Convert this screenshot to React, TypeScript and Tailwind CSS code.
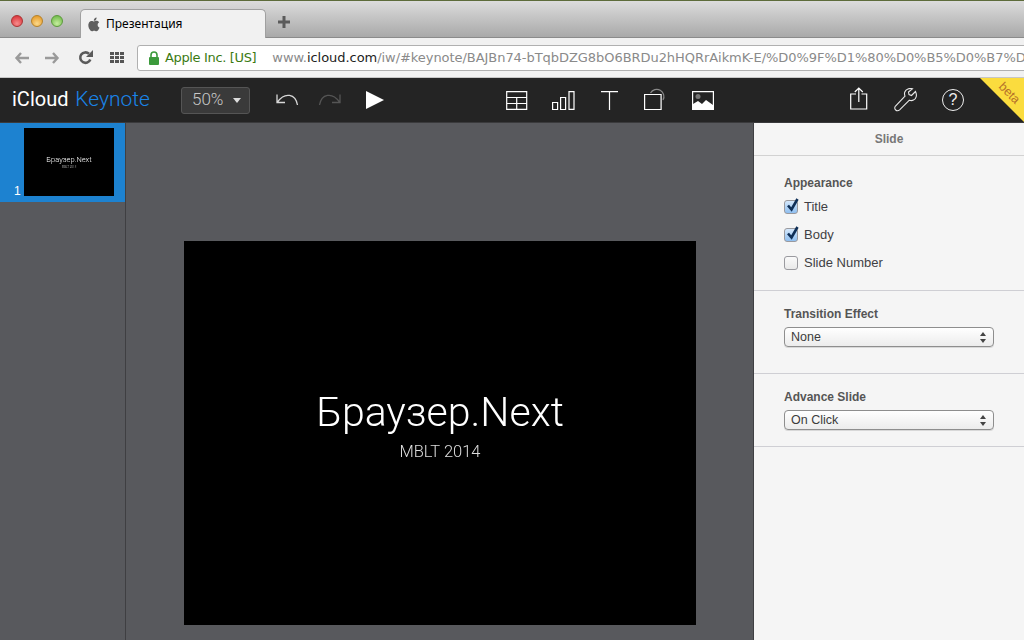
import React from "react";

const sans = "font-['Liberation_Sans',Arial,sans-serif]";

function Apple() {
  return (
    <svg width="13" height="15" viewBox="0 0 24 28" className="shrink-0">
      <path fill="#5f5f5f" d="M19.7 14.8c0-3.3 2.7-4.9 2.8-5-1.5-2.2-3.900-2.500-4.700-2.600-2-.2-3.900 1.200-4.900 1.200s-2.600-1.200-4.200-1.100c-2.200 0-4.200 1.200-5.300 3.200-2.300 3.900-.6 9.800 1.600 13 1.100 1.600 2.400 3.300 4.100 3.300 1.600-.1 2.300-1.100 4.200-1.100s2.500 1.100 4.200 1c1.700 0 2.800-1.600 3.900-3.200 1.200-1.800 1.700-3.600 1.800-3.700-.1 0-3.500-1.300-3.500-5zM16.500 5.100c.9-1.100 1.500-2.600 1.300-4.100-1.300.1-2.900.9-3.800 2-.8 1-1.600 2.500-1.400 4 1.500.1 3-.8 3.900-1.900z" />
    </svg>
  );
}

function Arrow({ flip }: { flip?: boolean }) {
  return (
    <svg width="15" height="14" viewBox="0 0 15 14" className={flip ? "-scale-x-100" : ""}>
      <path d="M7 2 2.500 7 7 12M3 7h12" fill="none" stroke="#9a9a9a" strokeWidth="2.400" />
    </svg>
  );
}

function Check({ on }: { on?: boolean }) {
  return (
    <div className={`relative w-[14px] h-[14px] rounded-[3px] border border-[#9a9a9f] ${on ? "bg-gradient-to-b from-[#d5e8fb] to-[#8fbff0]" : "bg-gradient-to-b from-[#fafafa] to-[#e9e9e9]"}`}>
      {on && (
        <svg width="16" height="16" viewBox="0 0 16 16" className="absolute left-0 -top-[4px]">
          <path d="M3 8.500 6.500 12.500 12.500 2" fill="none" stroke="#0f2f57" strokeWidth="2.600" />
        </svg>
      )}
    </div>
  );
}

function CheckRow({ label, on }: { label: string; on?: boolean }) {
  return (
    <div className="flex items-center h-[28px] gap-[6px]">
      <Check on={on} />
      <span className="text-[13px] text-[#3f3f44]">{label}</span>
    </div>
  );
}

function Select({ value }: { value: string }) {
  return (
    <div className="mt-[6px] w-[210px] h-[20px] rounded-[4px] border border-[#8e8e8e] bg-gradient-to-b from-[#ffffff] to-[#ececec] flex items-center justify-between pl-[6px] pr-[7px] shadow-[0_1px_0_#d8d8d8]">
      <span className="text-[12.5px] text-[#3c3c3c]">{value}</span>
      <svg width="6" height="11" viewBox="0 0 6 11">
        <path d="M3 0 6 4H0zM3 11 0 7h6z" fill="#444" />
      </svg>
    </div>
  );
}

export default function App() {
  return (
    <div className={`w-[1024px] h-[640px] overflow-hidden flex flex-col bg-[#58595d] ${sans}`}>
      <div className="h-[1px] bg-[#5d6b3a]" />
      {/* tab strip */}
      <div className="h-[37px] flex items-end bg-gradient-to-b from-[#dcdcdc] to-[#a9a9a9] border-b border-[#8b8b8b]">
        <div className="w-[80px] h-full flex items-start gap-[8px] pl-[11px] pt-[14px]">
          <div className="w-[12px] h-[12px] rounded-full border border-[#a33] bg-[radial-gradient(circle_at_50%_75%,#f78c8c,#d5262d)]" />
          <div className="w-[12px] h-[12px] rounded-full border border-[#b5822a] bg-[radial-gradient(circle_at_50%_75%,#fbd98a,#e28f16)]" />
          <div className="w-[12px] h-[12px] rounded-full border border-[#5c9a3c] bg-[radial-gradient(circle_at_50%_75%,#c6ee9e,#62b23c)]" />
        </div>
        <div className="w-[186px] h-[29px] -mb-px rounded-t-[5px] border border-b-0 border-[#a0a0a0] bg-[#f1f1f1] flex items-center pl-[6px] gap-[6px]">
          <Apple />
          <span className="text-[12px] text-black font-['Noto_Sans',sans-serif]">Презентация</span>
        </div>
        <svg width="12" height="12" viewBox="0 0 12 12" className="ml-[12px] mb-[9px]">
          <path d="M6 0v12M0 6h12" stroke="#5b5b5b" strokeWidth="3" />
        </svg>
      </div>
      {/* address bar */}
      <div className="h-[40px] bg-[#f1f1f1] flex items-center border-b border-[#c6c6c6]">
        <div className="w-[137px] flex items-center pl-[14px]">
          <Arrow />
          <div className="ml-[16px]"><Arrow flip /></div>
          <svg width="15" height="15" viewBox="0 0 15 15" className="ml-[18px]">
            <path d="M12.300 9.500A5.200 5.200 0 1 1 11 3.800" fill="none" stroke="#5b5b5b" strokeWidth="2.600" />
            <path d="M8 7h7V0z" fill="#5b5b5b" />
          </svg>
          <div className="ml-[17px] grid grid-cols-3 gap-[1px]">
            {Array.from({ length: 9 }).map((_, i) => (
              <div key={i} className="w-[4px] h-[3px] bg-[#555]" />
            ))}
          </div>
        </div>
        <div className="h-[26px] flex-1 min-w-0 -mr-[8px] rounded-l-[3px] border border-[#b0b0b0] bg-white flex items-center pl-[10px] overflow-hidden whitespace-nowrap font-['DejaVu_Sans',sans-serif] text-[13px]">
          <svg width="12" height="14" viewBox="0 0 12 14" className="shrink-0">
            <path d="M3 6V4a3 3 0 0 1 6 0v2" fill="none" stroke="#3c9a3c" strokeWidth="1.600" />
            <rect x="1" y="6" width="10" height="8" rx="1" fill="#3c9a3c" />
          </svg>
          <span className="ml-[5px] text-[#3b7a12] tracking-[-0.35px]">Apple Inc. [US]</span>
          <div className="ml-[8px] w-px h-[13px] bg-[#d5d5d5]" />
          <span className="ml-[8px] text-[#8a8a8a] tracking-[-0.05px]">
            www.<span className="text-[#222]">icloud.com</span>/iw/#keynote/BAJBn74-bTqbDZG8bO6BRDu2hHQRrAikmK-E/%D0%9F%D1%80%D0%B5%D0%B7%D0%B5%D0%BD%D1%82
          </span>
        </div>
      </div>
      {/* keynote toolbar */}
      <div className="relative h-[44px] bg-[#242424] flex items-center text-white overflow-hidden">
        <div className="w-[181px] pl-[12px] text-[20px] whitespace-nowrap font-['Roboto',sans-serif] font-light">
          <span className="text-white font-normal">iCloud</span> <span className="text-[#1a84e8] text-[21px] ml-[2px]">Keynote</span>
        </div>
        <div className="w-[69px] h-[27px] rounded-[3px] border border-[#555] bg-[#3a3a3a] flex items-center pl-[10px] gap-[10px] text-[17px] text-[#c8c8c8] font-['Roboto',sans-serif] font-light">
          50%
          <svg width="8" height="5" viewBox="0 0 8 5"><path d="M0 0h8L4 5z" fill="#ddd" /></svg>
        </div>
        <svg width="24" height="18" viewBox="0 0 24 18" className="ml-[25px]">
          <path d="M22.500 14C20.500 3 10 .5 2.500 11M2 3.500V11.500H10" fill="none" stroke="#d8d8d8" strokeWidth="1.300" />
        </svg>
        <svg width="24" height="18" viewBox="0 0 24 18" className="ml-[19px]">
          <path d="M1.500 14C3.500 3 14 .5 21.500 11M22 3.500V11.500H14" fill="none" stroke="#555" strokeWidth="1.300" />
        </svg>
        <svg width="18" height="18" viewBox="0 0 18 18" className="ml-[24px]"><path d="M0 0l18 9L0 18z" fill="#fff" /></svg>
        <svg width="22" height="19" viewBox="0 0 22 19" className="ml-[122px]">
          <path d="M.7.700h20v17.600H.7zM.7 6.500h20M.7 12.500h20M10.700 6.500v11.800" fill="none" stroke="#fff" strokeWidth="1.200" />
        </svg>
        <svg width="23" height="19" viewBox="0 0 23 19" className="ml-[24px]">
          <path d="M.6 11.500h5v7h-5zM8.600 6.500h5v12h-5zM17 .6h5v17.800h-5z" fill="none" stroke="#fff" strokeWidth="1.200" />
        </svg>
        <svg width="18" height="19" viewBox="0 0 18 19" className="ml-[26px]">
          <path d="M0 .7h17M8.500 .7V19" fill="none" stroke="#fff" strokeWidth="1.200" />
        </svg>
        <svg width="24" height="22" viewBox="0 0 24 22" className="ml-[25px] -mt-[3px]">
          <path d="M.6 6.500h16.500v15H.6z" fill="none" stroke="#fff" strokeWidth="1.200" />
          <path d="M6.500 5A6 6 0 1 1 19 12" fill="none" stroke="#8a8a8a" strokeWidth="1.200" />
        </svg>
        <svg width="22" height="19" viewBox="0 0 22 19" className="ml-[24px]">
          <path d="M.6.600h20.800v17.800H.6z" fill="none" stroke="#fff" strokeWidth="1.200" />
          <circle cx="6" cy="5.500" r="2.500" fill="#777" />
          <path d="M1 18v-5l5-3 4 3 4-4 7 5v4z" fill="#fff" />
        </svg>
        <svg width="18" height="23" viewBox="0 0 18 23" className="ml-[136px] -mt-[3px]">
          <path d="M6 7H.7v15h16V7H11.500M8.800 15V1M4.800 5l4-4 4 4" fill="none" stroke="#fff" strokeWidth="1.200" />
        </svg>
        <svg width="24" height="24" viewBox="0 0 24 24" className="ml-[26px]">
          <path d="M21.500 3.500 17.500 7.500 15 6.500 14.500 4 18.500.8C15.500-.2 12 1 10.800 4c-.5 1.500-.3 3 .2 4.200L1.500 18c-1.200 1.500-.8 3.200.2 4 1 .9 2.600 1 3.900-.2l9.800-9.600c1.300.5 2.800.5 4.100-.1 2.900-1.400 3.700-5.200 2-8.600z" fill="none" stroke="#e8e8e8" strokeWidth="1.100" />
        </svg>
        <div className="ml-[24px] w-[22px] h-[22px] rounded-full border border-[#eee] flex items-center justify-center text-[16px] text-[#eee]">?</div>
        <div className="absolute right-0 top-0 w-[44px] h-[44px] bg-[#fbdc3e] [clip-path:polygon(0_0,100%_0,100%_100%)]" />
        <span className="absolute right-[3px] top-[6px] rotate-45 text-[12.5px] text-[#b5702a]">beta</span>
      </div>
      <div className="h-px bg-[#3a3a3c]" />
      {/* workspace */}
      <div className="flex-1 flex min-h-0">
        <div className="w-[126px] border-r border-[#3f3f42] bg-[#58595d]">
          <div className="h-[79px] bg-[#1d82d0] flex pl-[14px] pt-[5px]">
            <span className="w-[10px] mt-[56px] text-[12px] leading-[14px] text-white">1</span>
            <div className="w-[90px] h-[68px] bg-black flex flex-col items-center pt-[27px] text-white font-['Roboto',sans-serif] font-light will-change-transform">
              <span className="text-[7.5px] leading-[9px]">Браузер.Next</span>
              <span className="mt-[1px] text-[3px] leading-[4px] text-[#ccc]">MBLT 2014</span>
            </div>
          </div>
        </div>
        <div className="flex-1 flex justify-center pt-[118px]">
          <div className="w-[512px] h-[384px] bg-black flex flex-col items-center pt-[144px] text-white font-['Roboto',sans-serif] font-light will-change-transform">
            <span className="text-[41px] leading-[54px]">Браузер.Next</span>
            <span className="mt-[3px] text-[16.5px] leading-[20px] text-[#ddd]">MBLT 2014</span>
          </div>
        </div>
        <div className="w-[271px] bg-[#f5f5f5] border-l border-[#3f3f42]">
          <div className="h-[33px] border-b border-[#d2d2d2] flex items-center justify-center text-[12px] font-bold text-[#777]">Slide</div>
          <div className="h-[135px] border-b border-[#cfcfd4] pl-[30px] pt-[20px]">
            <div className="text-[12px] leading-[14px] font-bold text-[#555]">Appearance</div>
            <div className="mt-[3px]">
              <CheckRow label="Title" on />
              <CheckRow label="Body" on />
              <CheckRow label="Slide Number" />
            </div>
          </div>
          <div className="h-[83px] border-b border-[#cfcfd4] pl-[30px] pt-[16px]">
            <div className="text-[12px] leading-[14px] font-bold text-[#555]">Transition Effect</div>
            <Select value="None" />
          </div>
          <div className="h-[73px] border-b border-[#cfcfd4] pl-[30px] pt-[16px]">
            <div className="text-[12px] leading-[14px] font-bold text-[#555]">Advance Slide</div>
            <Select value="On Click" />
          </div>
        </div>
      </div>
    </div>
  );
}
